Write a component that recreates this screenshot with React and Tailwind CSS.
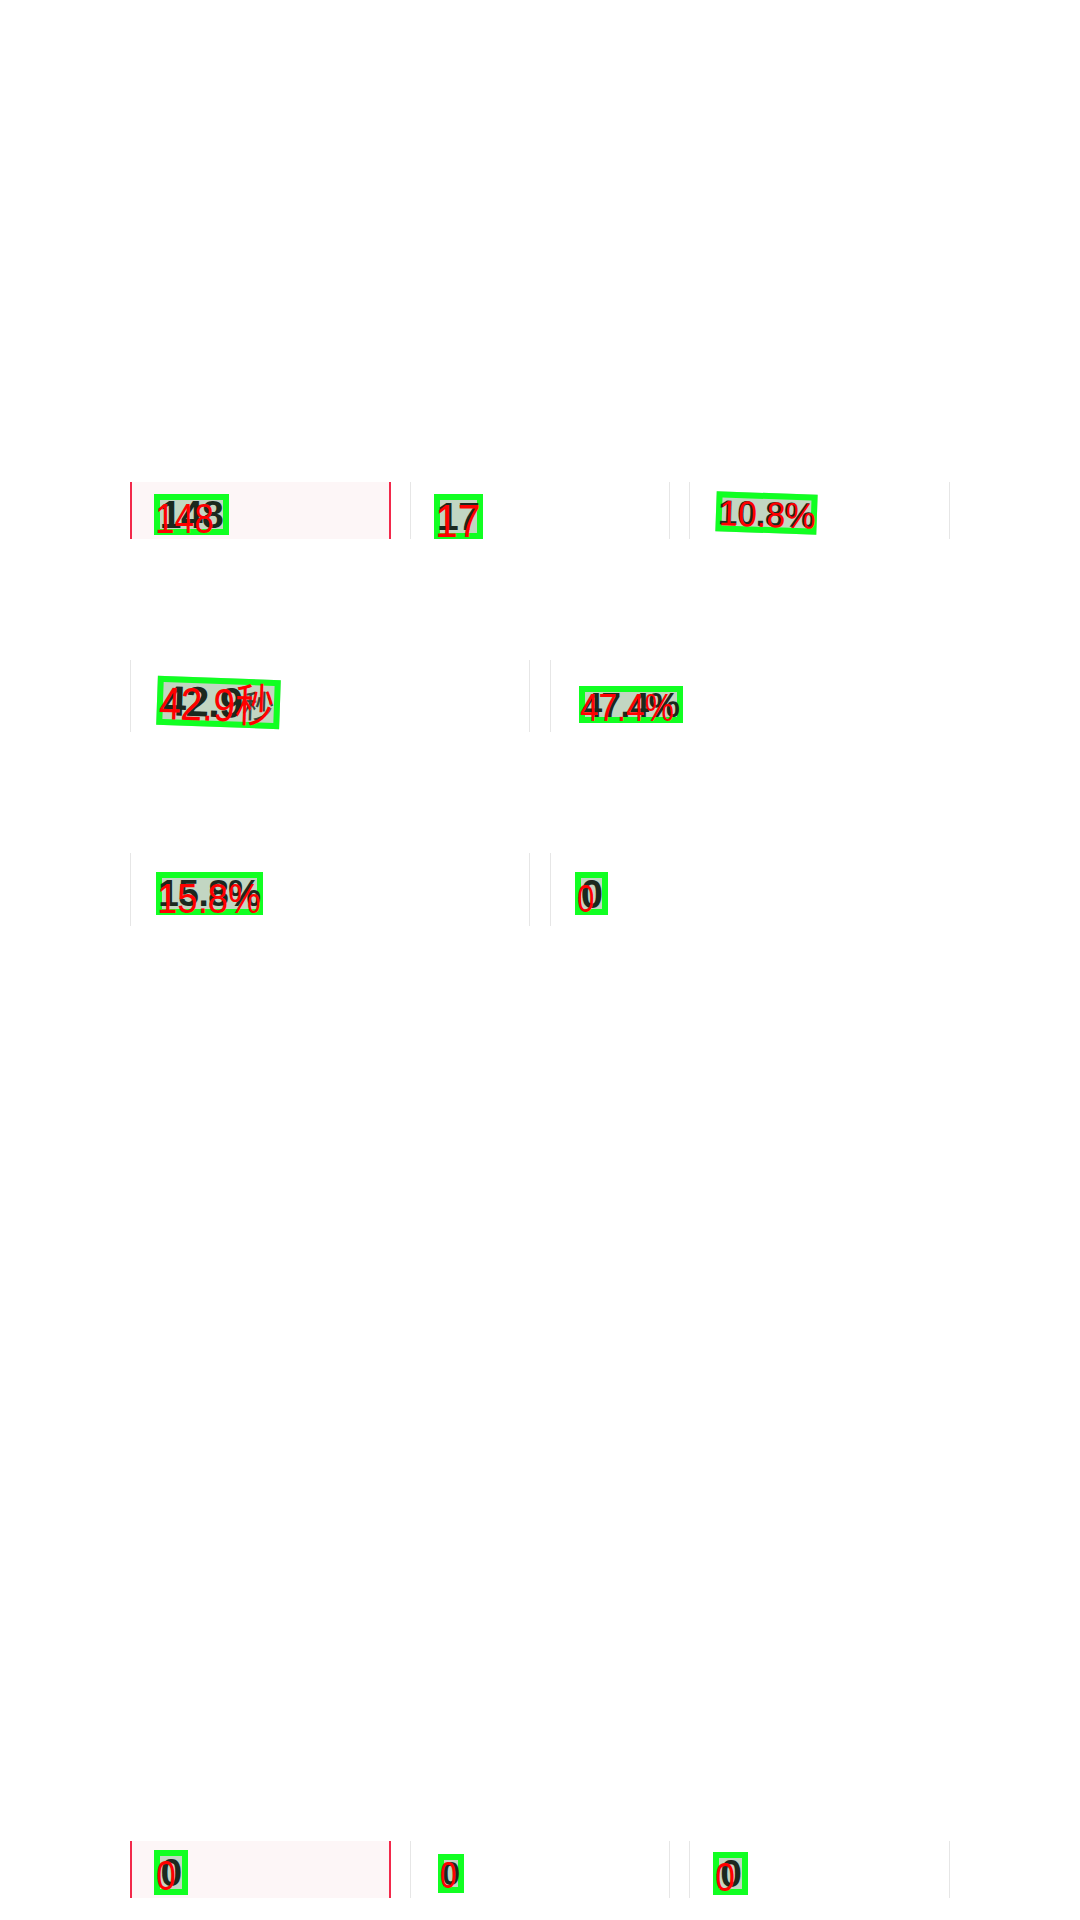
import React from "react";

function Box({ box, red, children, redText }) {
  return (
    <div
      className={`relative box-border flex shrink-0 items-center justify-center border-[6px] border-[#11ff22] bg-[#c2d6c2] ${box}`}
    >
      {children}
      <span
        className={`pointer-events-none absolute origin-top-left whitespace-nowrap font-normal leading-none text-[#ff0000] ${red}`}
      >
        {redText}
      </span>
    </div>
  );
}

function Dark({ className, children }) {
  return (
    <span className={`whitespace-nowrap font-bold leading-none tracking-[-0.5px] text-[#1b291e] ${className}`}>
      {children}
    </span>
  );
}

export default function App() {
  return (
    <div className="min-h-[1920px] w-[1080px] bg-white px-[130px] pt-[482px] font-['Liberation_Sans','Noto_Sans_CJK_SC',sans-serif]">
      {/* Row 1 */}
      <div className="grid h-[57px] grid-cols-3 gap-x-[19px]">
        <div className="flex items-start border-x-2 border-[#f2294b] bg-[#fdf6f7]">
          <Box
            box="ml-[22px] mt-[12px] w-[75px] h-[41px]"
            red="left-[-5px] top-[-3px] text-[43px] scale-x-[0.82]"
            redText="148"
          >
            <Dark className="text-[39px]">148</Dark>
          </Box>
        </div>
        <div className="flex items-start border-x border-[#e6e6e6]">
          <Box
            box="ml-[23px] mt-[12px] w-[49px] h-[45px]"
            red="left-[-5px] top-[-3px] text-[47px] scale-x-[0.87]"
            redText="17"
          >
            <Dark className="text-[39px]">17</Dark>
          </Box>
        </div>
        <div className="flex items-start border-x border-[#e6e6e6]">
          <Box
            box="ml-[26px] mt-[11px] w-[101px] h-[40px] rotate-[2deg]"
            red="left-[-3px] top-[-2px] text-[36px] scale-x-[0.95]"
            redText="10.8%"
          >
            <Dark className="text-[35px]">10.8%</Dark>
          </Box>
        </div>
      </div>

      {/* Row 2 */}
      <div className="mt-[121px] grid h-[72px] grid-cols-2 gap-x-[20px]">
        <div className="flex items-start border-x border-[#e6e6e6]">
          <Box
            box="ml-[26px] mt-[18px] w-[123px] h-[49px] rotate-[2deg]"
            red="left-[-4px] top-[-2px] text-[46px] scale-x-[0.85]"
            redText="42.9秒"
          >
            <Dark className="text-[42px]">
              42.9
              <span className="text-[32px] font-normal text-[#3a463c]">秒</span>
            </Dark>
          </Box>
        </div>
        <div className="flex items-start border-l border-[#e6e6e6]">
          <Box
            box="ml-[28px] mt-[26px] w-[104px] h-[37px]"
            red="left-[-5px] top-[-4px] text-[39px] scale-x-[0.85]"
            redText="47.4%"
          >
            <Dark className="text-[35px]">47.4%</Dark>
          </Box>
        </div>
      </div>

      {/* Row 3 */}
      <div className="mt-[121px] grid h-[73px] grid-cols-2 gap-x-[20px]">
        <div className="flex items-start border-x border-[#e6e6e6]">
          <Box
            box="ml-[25px] mt-[19px] w-[107px] h-[43px]"
            red="left-[-5px] top-[-1px] text-[43px] scale-x-[0.85]"
            redText="15.8%"
          >
            <Dark className="text-[37px]">15.8%</Dark>
          </Box>
        </div>
        <div className="flex items-start border-l border-[#e6e6e6]">
          <Box
            box="ml-[24px] mt-[19px] w-[33px] h-[43px]"
            red="left-[-4px] top-[1px] text-[39px] scale-x-[0.8]"
            redText="0"
          >
            <Dark className="text-[40px]">0</Dark>
          </Box>
        </div>
      </div>

      {/* Row 4 */}
      <div className="mt-[915px] grid h-[57px] grid-cols-3 gap-x-[19px]">
        <div className="flex items-start border-x-2 border-[#f2294b] bg-[#fdf6f7]">
          <Box
            box="ml-[22px] mt-[9px] w-[34px] h-[45px]"
            red="left-[-4px] top-[-1px] text-[42px] scale-x-[0.85]"
            redText="0"
          >
            <Dark className="text-[39px]">0</Dark>
          </Box>
        </div>
        <div className="flex items-start border-x border-[#e6e6e6]">
          <Box
            box="ml-[27px] mt-[13px] w-[26px] h-[39px]"
            red="left-[-4px] top-[-2px] text-[36px] scale-x-[0.82]"
            redText="0"
          >
            <Dark className="text-[33px]">0</Dark>
          </Box>
        </div>
        <div className="flex items-start border-x border-[#e6e6e6]">
          <Box
            box="ml-[23px] mt-[11px] w-[35px] h-[43px]"
            red="left-[-4px] top-[-1px] text-[40px] scale-x-[0.9]"
            redText="0"
          >
            <Dark className="text-[39px]">0</Dark>
          </Box>
        </div>
      </div>
    </div>
  );
}
